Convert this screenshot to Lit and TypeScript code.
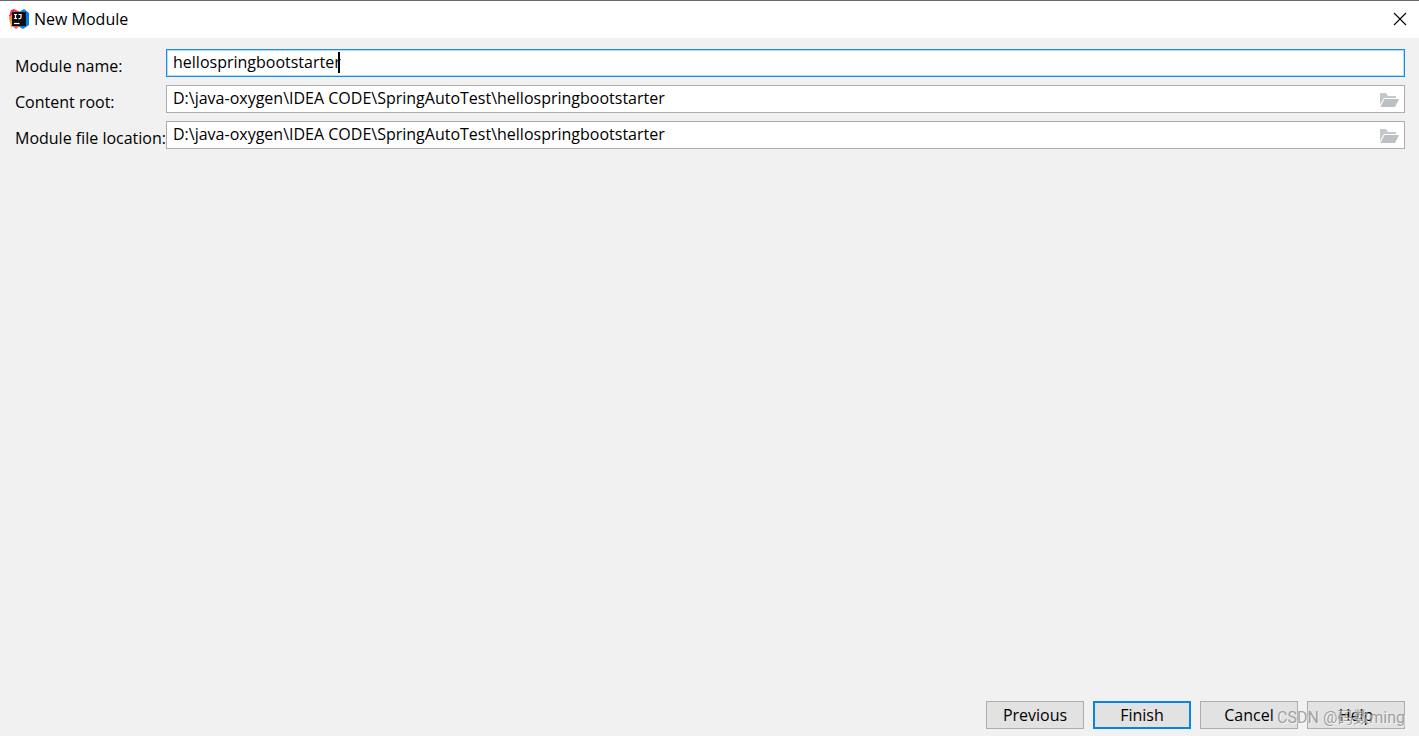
import { LitElement, html, css, svg } from "lit";
import { customElement, state } from "lit/decorators.js";

const folder = svg`
  <path d="M0 12V1Q0 0 1 0H6L8 3H16V5H4L0 12Z" fill="#c3c8cb"/>
  <path d="M4.5 6H19L15 14H0.5Z" fill="#bac0c4"/>`;

@customElement("app-root")
export class AppRoot extends LitElement {
  static styles = css`
    :host {
      display: flex;
      flex-direction: column;
      box-sizing: border-box;
      min-height: 100vh;
      background: #f1f1f1;
      border-top: 1px solid #6b6969;
      color: #000;
      font: 16px/22px "Open Sans", "Noto Sans CJK SC", sans-serif;
    }
    .titlebar {
      display: flex;
      align-items: center;
      gap: 5px;
      box-sizing: border-box;
      height: 37px;
      padding: 0 12px 2px 9px;
      background: #fff;
    }
    .title {
      flex: 1;
      margin: 0;
      font: inherit;
    }
    .close {
      display: flex;
      padding: 0;
      border: 0;
      background: none;
    }
    .form {
      flex: 1;
      display: grid;
      grid-template-columns: 151px 1fr;
      grid-auto-rows: 28px;
      row-gap: 8px;
      align-content: start;
      padding: 11px 14px 0 15px;
    }
    .label {
      padding-top: 6px;
      white-space: nowrap;
    }
    .field {
      position: relative;
      display: flex;
      box-sizing: border-box;
      border: 1px solid #adadad;
      background: #fff;
    }
    .field.active {
      border-color: #1c8ae2;
      box-shadow: inset 0 0 0 1px #b9dcf6;
    }
    .input {
      flex: 1;
      min-width: 0;
      margin: 0;
      padding: 0 6px 2px;
      border: 0;
      outline: 0;
      background: none;
      color: inherit;
      font: inherit;
    }
    .caret {
      position: absolute;
      top: 2px;
      left: 3px;
      height: 21px;
      border-right: 2px solid #000;
      color: transparent;
      pointer-events: none;
    }
    .browse {
      display: flex;
      align-items: center;
      padding: 2px 5px 0 0;
      border: 0;
      background: none;
    }
    .footer {
      position: relative;
      display: flex;
      justify-content: flex-end;
      gap: 9px;
      padding: 0 14px 7px;
    }
    .button {
      box-sizing: border-box;
      width: 98px;
      height: 28px;
      padding: 0;
      border: 1px solid #adadad;
      background: #e2e2e2;
      color: inherit;
      font: inherit;
    }
    .button.primary {
      border: 2px solid #0a84e0;
    }
    .watermark {
      position: absolute;
      right: 14px;
      bottom: 7px;
      color: #8c8c8ccc;
      text-shadow: 1px 1px 0 #ffffff99;
      font-family: Roboto, "Noto Sans CJK SC", sans-serif;
      pointer-events: none;
    }
  `;

  @state() private name = "hellospringbootstarter";
  private path = "D:\\java-oxygen\\IDEA CODE\\SpringAutoTest\\hellospringbootstarter";

  private pathRow(id: string, label: string) {
    return html`
      <label class="label" for=${id}>${label}</label>
      <div class="field">
        <input class="input" id=${id} type="text" .value=${this.path} />
        <button class="browse" type="button" aria-label="Browse">
          <svg width="19" height="14" viewBox="0 0 19 14">${folder}</svg>
        </button>
      </div>`;
  }

  render() {
    return html`
      <header class="titlebar">
        <svg width="20" height="20" viewBox="0 0 20 20" aria-hidden="true">
          <path d="M0 9L3 8L6 17L2 18Z" fill="#f7a02f"/>
          <path d="M2 1L5 0L11 3L6 13L0 7Z" fill="#f0325f"/>
          <path d="M0 8L4 5V12L1 12Z" fill="#f78a3c"/>
          <path d="M10 3L15 0L20 4V16L14 20L9 17Z" fill="#087cf0"/>
          <path d="M2 16L10 15L11 17L7 20Z" fill="#f15a6b"/>
          <rect x="3" y="3" width="14" height="14" fill="#101010"/>
          <path d="M5 5.5H8M6.5 5.5V9.5M5 9.5H8M9.5 5.5H12V8.5Q12 9.7 10.7 9.7H9.5" fill="none" stroke="#fff" stroke-width="1.2"/>
          <path d="M5 14.5H10.5" stroke="#fff" stroke-width="1.2"/>
        </svg>
        <h1 class="title">New Module</h1>
        <button class="close" type="button" aria-label="Close">
          <svg width="14" height="14" viewBox="0 0 14 14"><path d="M1 1L13 13M13 1L1 13" stroke="#000" stroke-width="1.1"/></svg>
        </button>
      </header>
      <main class="form">
        <label class="label" for="name">Module name:</label>
        <div class="field active">
          <input class="input" id="name" type="text" .value=${this.name}
            @input=${(e: Event) => (this.name = (e.target as HTMLInputElement).value)} />
          <span class="caret" aria-hidden="true">${this.name}</span>
        </div>
        ${this.pathRow("root", "Content root:")}
        ${this.pathRow("location", "Module file location:")}
      </main>
      <footer class="footer">
        <button class="button" type="button">Previous</button>
        <button class="button primary" type="button">Finish</button>
        <button class="button" type="button">Cancel</button>
        <button class="button" type="button">Help</button>
        <span class="watermark">CSDN @码数ming</span>
      </footer>`;
  }
}
